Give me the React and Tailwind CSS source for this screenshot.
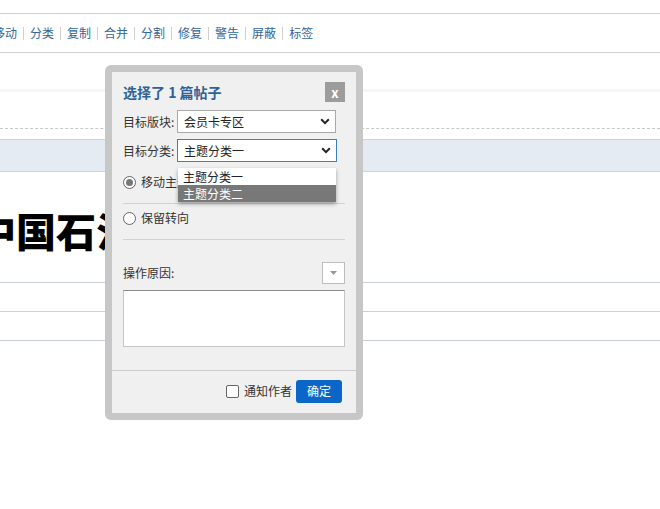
import React from "react";

const Chevron = () => (
  <svg width="10" height="7" viewBox="0 0 10 7" className="shrink-0">
    <path d="M1.2 1.3 L5 5.1 L8.8 1.3" fill="none" stroke="#222" strokeWidth="2" />
  </svg>
);

const Sep = () => <span className="mx-[6px] h-[13px] w-px bg-[#cfcfcf]" />;

const tools = ["移动", "分类", "复制", "合并", "分割", "修复", "警告", "屏蔽", "标签"];

export default function App() {
  return (
    <div className="relative h-[509px] w-[660px] overflow-hidden bg-white font-['Noto_Sans_CJK_SC','Noto_Sans',sans-serif] text-[12px] text-[#333]">
      {/* page behind */}
      <div className="h-[13px]" />
      <div className="h-px bg-[#d0d0d0]" />
      <div className="flex h-[38px] items-center ml-[-7px] text-[12px] text-[#336699]">
        {tools.map((t, i) => (
          <React.Fragment key={t}>
            {i > 0 && <Sep />}
            <span className="leading-none">{t}</span>
          </React.Fragment>
        ))}
      </div>
      <div className="h-px bg-[#d0d0d0]" />
      <div className="h-[36px]" />
      <div className="h-[3px] bg-[#f6f6f6]" />
      <div className="h-[36px]" />
      <div className="border-t border-dashed border-[#c8c8c8]" />
      <div className="h-[10px]" />
      <div className="h-[33px] border-y border-[#c9d5e0] bg-[#e4ebf2]" />
      <div className="h-[38px]" />
      <div className="ml-[-24px] h-[40px] whitespace-nowrap text-[40px] font-black leading-[40px] text-black">
        中国石油化工集团
      </div>
      <div className="h-[32px]" />
      <div className="h-px bg-[#c9d0d8]" />
      <div className="h-[28px]" />
      <div className="h-px bg-[#c5d2de]" />
      <div className="h-[28px]" />
      <div className="h-px bg-[#c9d0d8]" />

      {/* dialog */}
      <div className="absolute left-[105px] top-[65px] h-[355px] w-[258px] rounded-[6px] bg-[#c7c7c7] p-[7px]">
        <div className="relative flex h-full flex-col bg-[#f0f0f0]">
          <div className="flex flex-col px-[11px] pt-[10px]">
            <div className="flex h-[20px] items-center justify-between">
              <span className="text-[14px] font-bold text-[#2f6397]">选择了 1 篇帖子</span>
              <span className="flex h-[20px] w-[20px] items-center justify-center bg-[#9c9c9c] text-[13px] font-bold leading-none text-white">
                x
              </span>
            </div>
            <div className="mt-[8px] flex h-[23px] items-center">
              <span className="w-[54px]">目标版块:</span>
              <div className="flex h-[23px] w-[159px] items-center justify-between border border-[#a9a9a9] bg-white pl-[6px] pr-[5px] text-[#222]">
                <span>会员卡专区</span>
                <Chevron />
              </div>
            </div>
            <div className="mt-[6px] flex h-[23px] items-center">
              <span className="w-[54px]">目标分类:</span>
              <div className="flex h-[23px] w-[160px] items-center justify-between border border-[#3c7fc6] bg-white pl-[6px] pr-[5px] text-[#222]">
                <span>主题分类一</span>
                <Chevron />
              </div>
            </div>
            <div className="mt-[10px] flex h-[20px] items-center">
              <span className="mr-[5px] flex h-[13px] w-[13px] items-center justify-center rounded-full border border-[#666] bg-white">
                <span className="h-[7px] w-[7px] rounded-full bg-[#777]" />
              </span>
              <span>移动主题</span>
            </div>
            <div className="mt-[11px] h-px bg-[#d2d2d2]" />
            <div className="mt-[4px] flex h-[20px] items-center">
              <span className="mr-[5px] h-[13px] w-[13px] rounded-full border border-[#666] bg-white" />
              <span>保留转向</span>
            </div>
            <div className="mt-[11px] h-px bg-[#d2d2d2]" />
            <div className="mt-[22px] flex h-[22px] items-center justify-between">
              <span>操作原因:</span>
              <span className="flex h-[22px] w-[23px] items-center justify-center border border-[#bdbdbd] bg-white">
                <svg width="7" height="4" viewBox="0 0 7 4">
                  <path d="M0 0 L7 0 L3.5 4 Z" fill="#999" />
                </svg>
              </span>
            </div>
            <div className="mt-[6px] h-[57px] border border-[#c6c6c6] border-t-[#8a8a8a] bg-white" />
          </div>
          <div className="mt-auto flex h-[43px] items-center justify-end border-t border-[#cdcdcd] pb-[2px] pr-[14px]">
            <span className="mr-[5px] h-[13px] w-[13px] rounded-[2px] border border-[#666] bg-white" />
            <span className="mr-[4px] text-[#333]">通知作者</span>
            <span className="flex h-[23px] w-[46px] items-center justify-center rounded-[3px] bg-[#0a66c8] text-white">
              确定
            </span>
          </div>

          {/* open dropdown list */}
          <div className="absolute left-[66px] top-[96px] flex w-[158px] flex-col bg-white shadow-[0_2px_4px_rgba(0,0,0,0.35)]">
            <div className="flex h-[17px] items-center pl-[5px] text-[#222]">主题分类一</div>
            <div className="flex h-[17px] items-center bg-[#787878] pl-[5px] text-white">主题分类二</div>
          </div>
        </div>
      </div>
    </div>
  );
}
